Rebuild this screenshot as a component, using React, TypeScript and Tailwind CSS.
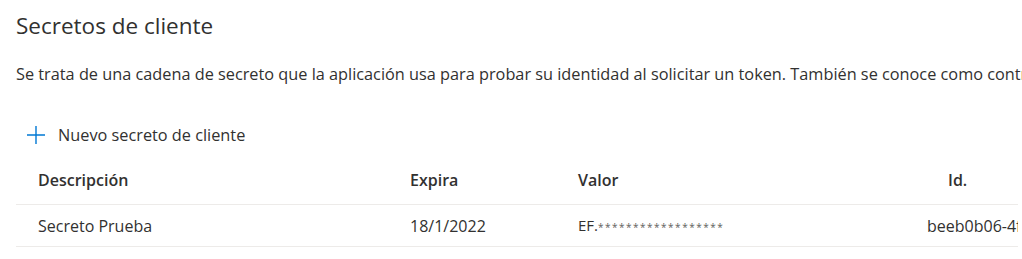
import React from 'react'

const font = { fontFamily: '"Open Sans", "Noto Sans", sans-serif' }

interface Secret {
  description: string
  expires: string
  hint: string
  id: string
}

const secrets: Secret[] = [
  {
    description: 'Secreto Prueba',
    expires: '18/1/2022',
    hint: 'EF.',
    id: 'beeb0b06-4f2a-4c1e-9d3b-7a1f0c2e5b8d',
  },
]

function PlusIcon() {
  return (
    <svg width="20" height="20" viewBox="0 0 20 20" className="text-[#0078d4]">
      <path d="M10 1v18M1 10h18" stroke="currentColor" strokeWidth="1.4" fill="none" />
    </svg>
  )
}

export default function App() {
  return (
    <div className="w-[1022px] h-[259px] overflow-hidden bg-white text-[#323130]" style={font}>
      <div className="pl-4 pt-[11px]">
        <h2 className="text-[22.5px] leading-[30px] font-normal whitespace-nowrap">Secretos de cliente</h2>
        <p className="mt-[22px] text-[16.3px] leading-[22px] whitespace-nowrap">
          Se trata de una cadena de secreto que la aplicación usa para probar su identidad al solicitar un token. También se conoce como contraseña de aplicación.
        </p>

        <button className="mt-[30px] h-10 flex items-center gap-3 pl-[10px] text-[16.3px] text-[#323130]">
          <PlusIcon />
          <span>Nuevo secreto de cliente</span>
        </button>

        <div className="w-[1002px] overflow-hidden text-[16px]">
          <div className="grid grid-cols-[372px_168px_349px_1fr] h-[50px] items-center border-b border-[#edebe9] pl-[22px] font-semibold">
            <div>Descripción</div>
            <div>Expira</div>
            <div>Valor</div>
            <div className="pl-[21px]">Id.</div>
          </div>
          {secrets.map((s) => (
            <div
              key={s.id}
              className="grid grid-cols-[372px_168px_349px_1fr] h-[42px] items-center border-b border-[#edebe9] pl-[22px]"
            >
              <div>{s.description}</div>
              <div>{s.expires}</div>
              <div className="flex items-baseline">
                <span className="text-[15px]">{s.hint}</span>
                <span className="text-[10px] tracking-[1.5px] text-[#605e5c]">******************</span>
              </div>
              <div className="whitespace-nowrap overflow-hidden">{s.id}</div>
            </div>
          ))}
        </div>
      </div>
    </div>
  )
}
